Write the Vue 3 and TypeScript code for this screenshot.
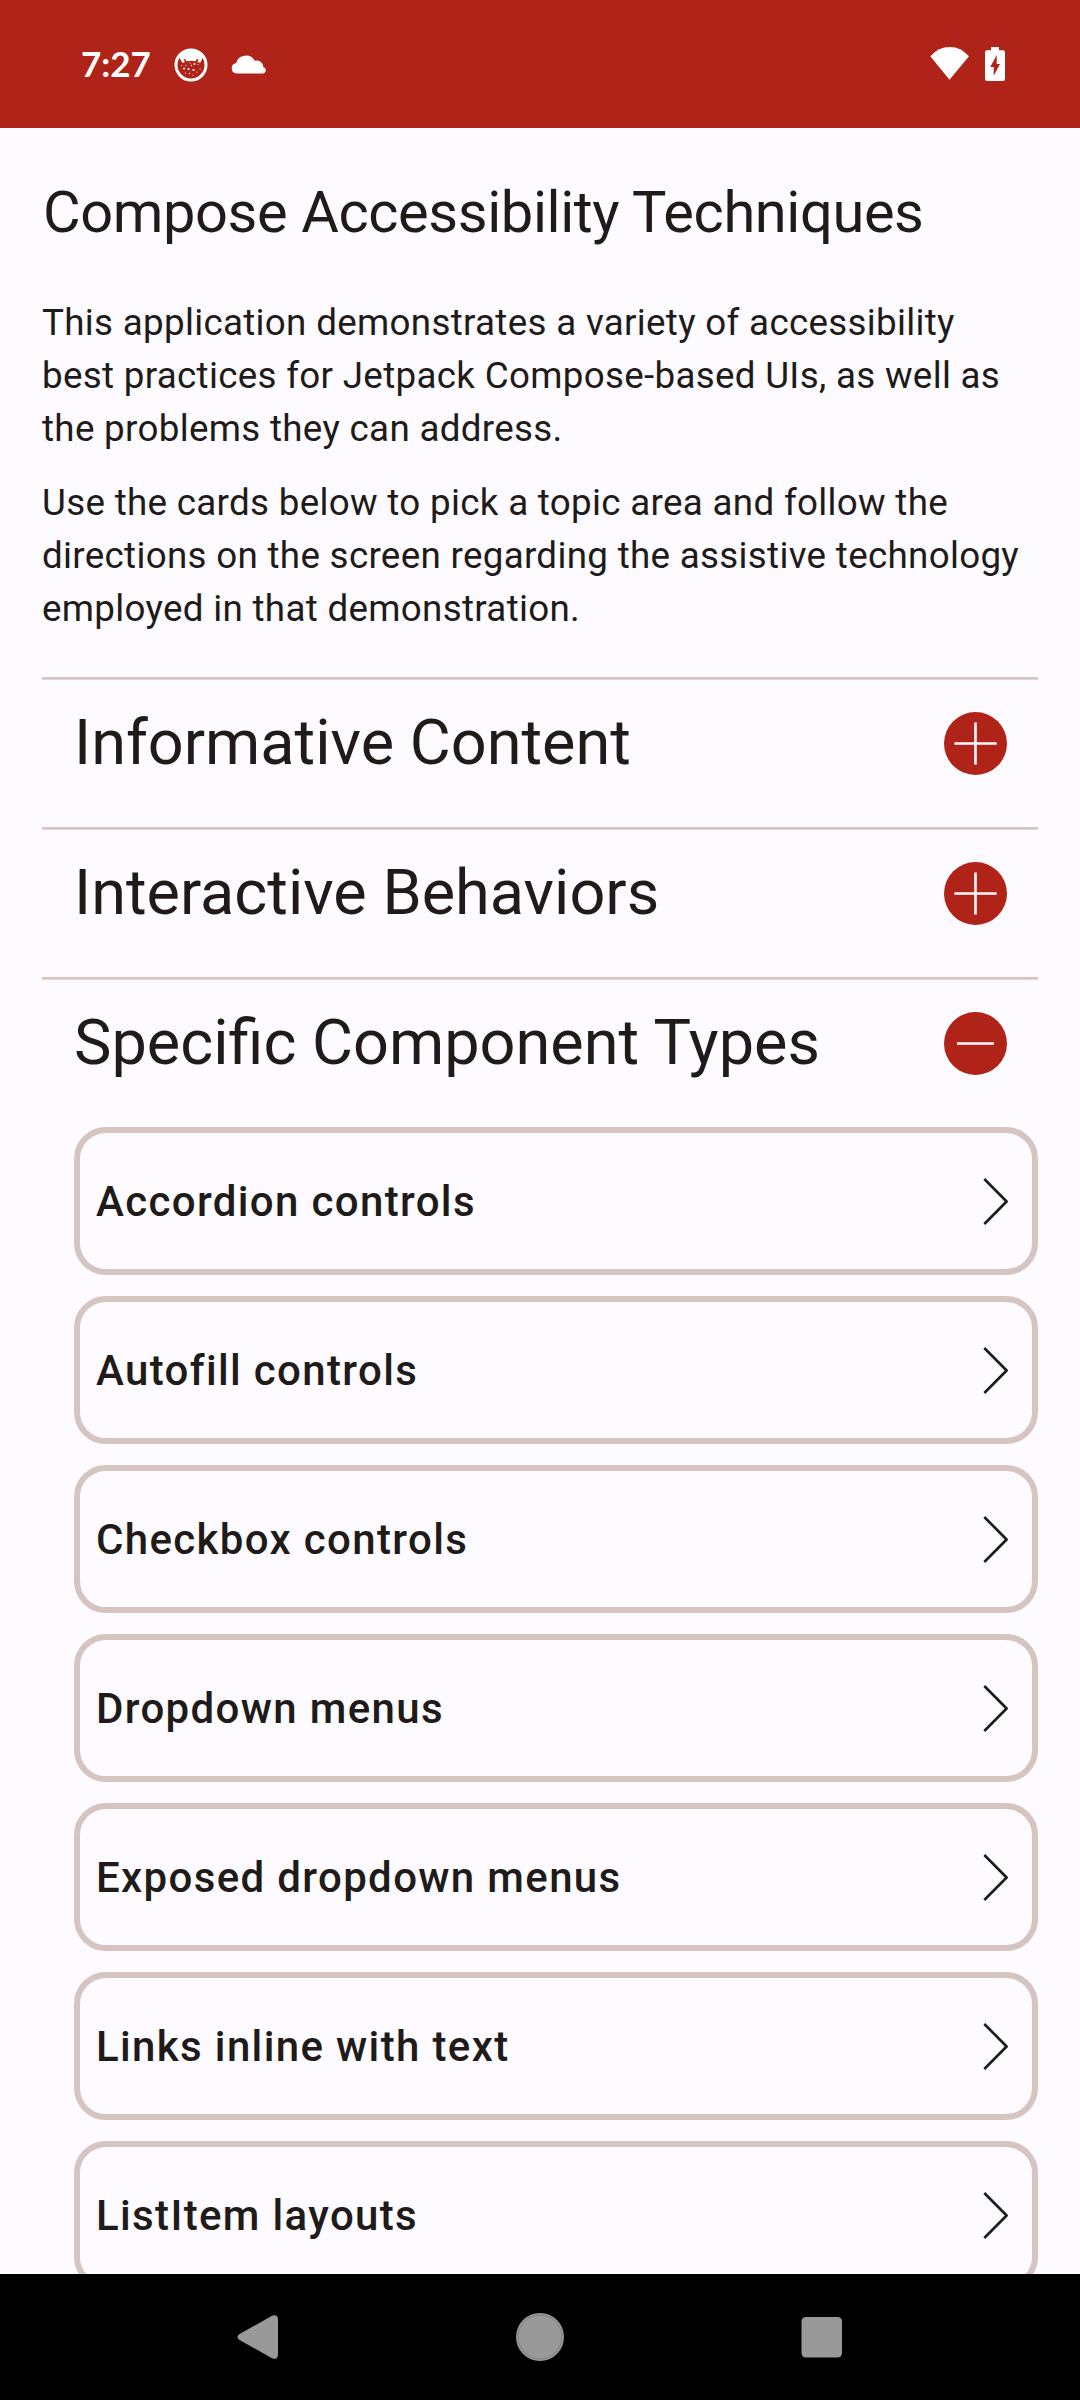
<script setup lang="ts">
import { ref } from 'vue'

interface Section {
  title: string
  items: string[]
}

const sections: Section[] = [
  { title: 'Informative Content', items: [] },
  { title: 'Interactive Behaviors', items: [] },
  {
    title: 'Specific Component Types',
    items: [
      'Accordion controls',
      'Autofill controls',
      'Checkbox controls',
      'Dropdown menus',
      'Exposed dropdown menus',
      'Links inline with text',
      'ListItem layouts',
    ],
  },
]

const expanded = ref<number>(2)

function toggle(index: number): void {
  expanded.value = expanded.value === index ? -1 : index
}
</script>

<template>
  <div class="screen">
    <header class="status">
      <span class="clock">7:27</span>
      <svg class="cat" width="34" height="34" viewBox="0 0 34 34">
        <circle cx="17" cy="17" r="15" fill="none" stroke="#fff" stroke-width="3" />
        <path
          d="M5 7Q17 -1 29 7L29 9 26.500 14.500 23.500 14.500 24.500 11.500 22.800 11 21.500 13.200Q17 12.300 12.500 13.200L11 11 9.500 11.500 11 14 8.500 15 5 9Z"
          fill="#fff"
        />
        <g fill="#fff">
          <circle cx="20.500" cy="16" r="1" /><circle cx="17.500" cy="17.500" r=".7" />
          <circle cx="10" cy="20.500" r="1" /><circle cx="14.500" cy="21" r="1" />
          <circle cx="19.500" cy="22" r="1.100" /><circle cx="12" cy="17.500" r=".6" />
          <circle cx="24" cy="16.500" r=".6" /><circle cx="26" cy="21" r=".6" />
          <circle cx="7.500" cy="17.500" r=".6" /><circle cx="15.500" cy="25.500" r=".7" />
          <circle cx="11.500" cy="25" r=".6" /><circle cx="23" cy="24" r=".6" />
          <circle cx="19" cy="27" r=".6" /><circle cx="16" cy="15" r=".6" />
        </g>
      </svg>
      <svg class="cloud" width="36" height="20" viewBox="0 0 36 20">
        <path d="M5.500 19.500A5.200 5.200 0 0 1 5 9.200A10.200 10.200 0 0 1 23.800 6.800A6.500 6.500 0 0 1 32.300 13A3.400 3.400 0 0 1 32.500 19.500Z" fill="#fff" />
      </svg>
      <span class="spacer"></span>
      <svg class="wifi" width="40" height="34" viewBox="0 0 40 34">
        <path d="M.3 9.300Q8.500 0 19.700 0T39 9.300L19.500 32.700Z" fill="#fff" />
      </svg>
      <svg class="battery" width="20" height="34" viewBox="0 0 20 34">
        <path
          d="M6 0H14V3.300H18Q20 3.300 20 5.300V32Q20 34 18 34H2Q0 34 0 32V5.300Q0 3.300 2 3.300H6ZM11.700 8L5.300 20H8.700V28.700L15 17H11.700Z"
          fill="#fff" fill-rule="evenodd"
        />
      </svg>
    </header>

    <main class="content">
      <h1>Compose Accessibility Techniques</h1>
      <p>
        This application demonstrates a variety of accessibility<br />
        best practices for Jetpack Compose-based UIs, as well as<br />
        the problems they can address.
      </p>
      <p>
        Use the cards below to pick a topic area and follow the<br />
        directions on the screen regarding the assistive technology<br />
        employed in that demonstration.
      </p>

      <div class="sections">
        <section v-for="(section, i) in sections" :key="section.title">
          <div class="heading" @click="toggle(i)">
            <h2>{{ section.title }}</h2>
            <svg width="63" height="63" viewBox="0 0 63 63">
              <circle cx="31.500" cy="31.500" r="31.500" fill="#b02318" />
              <path
                :d="expanded === i ? 'M13 31.500H50' : 'M10.400 31.500H52.600M31.500 10.400V52.600'"
                stroke="#fdfbff" stroke-width="2.625" fill="none"
              />
            </svg>
          </div>
          <div v-if="expanded === i" class="cards">
            <div v-for="item in section.items" :key="item" class="card">
              <span>{{ item }}</span>
              <svg width="26" height="50" viewBox="0 0 26 50">
                <path d="M2.300 2L24.600 24.500L2.300 47" fill="none" stroke="#201a19" stroke-width="2.625" stroke-linejoin="round" />
              </svg>
            </div>
          </div>
        </section>
      </div>
    </main>

    <nav class="navbar">
      <svg width="48" height="50" viewBox="0 0 48 50">
        <path d="M5.500 22L38 3.800Q44 1.500 44 8V42Q44 48.500 38 46.200L5.500 28Q1.500 25 5.500 22Z" fill="#999" />
      </svg>
      <svg width="50" height="50" viewBox="0 0 50 50">
        <circle cx="25" cy="25" r="24" fill="#999" />
        <circle cx="25" cy="25" r="22" fill="none" stroke="#777" stroke-width=".8" />
      </svg>
      <svg width="48" height="50" viewBox="0 0 48 50">
        <rect x="3.500" y="5" width="40.500" height="40.500" rx="4.500" fill="#999" />
      </svg>
    </nav>
  </div>
</template>

<style>
body {
  margin: 0;
  background: #fdfbff;
}
</style>

<style scoped>
.screen {
  width: 1080px;
  height: 2400px;
  display: flex;
  flex-direction: column;
  overflow: hidden;
  background: #fdfbff;
  color: #201a19;
  font-family: Roboto, sans-serif;
}
.screen svg {
  display: block;
  flex: none;
}
.status {
  flex: none;
  box-sizing: border-box;
  height: 128px;
  background: #b02318;
  display: flex;
  align-items: flex-start;
  padding: 0 75px 0 81px;
}
.clock {
  width: 93px;
  margin-top: 43px;
  font: 700 35px/40px Lato, sans-serif;
  color: #fff;
}
.cat {
  margin-top: 48px;
}
.cloud {
  margin: 54px 0 0 23px;
}
.spacer {
  flex: 1;
}
.wifi {
  margin-top: 47px;
}
.battery {
  margin: 47px 0 0 15px;
}
.content {
  flex: 1;
  min-height: 0;
  overflow: hidden;
  padding: 0 42px;
}
h1 {
  margin: 48px 0 47px 1px;
  font-size: 57.750px;
  line-height: 73px;
  font-weight: 400;
  letter-spacing: -0.390px;
  white-space: nowrap;
}
p {
  margin: 0 0 21px;
  font-size: 36.750px;
  line-height: 53px;
  letter-spacing: 0.310px;
  white-space: nowrap;
}
.sections {
  margin-top: 42px;
}
.heading {
  box-sizing: border-box;
  height: 150px;
  border-top: 2px solid #d5c4c0;
  box-shadow: inset 0 1px #e2d3d1;
  padding: 33px 31px 0 32px;
  display: flex;
  justify-content: space-between;
  align-items: flex-start;
}
h2 {
  margin: -9px 0 0;
  font-size: 63px;
  line-height: 80px;
  font-weight: 400;
  white-space: nowrap;
}
.cards {
  display: flex;
  flex-direction: column;
  gap: 21px;
  padding-left: 32px;
}
.card {
  box-sizing: border-box;
  flex: none;
  height: 148px;
  border: 6px solid #d5c4c0;
  border-radius: 32px;
  padding: 1px 24px 0 16px;
  display: flex;
  align-items: center;
  justify-content: space-between;
}
.card span {
  font-size: 42px;
  line-height: 56px;
  font-weight: 500;
  letter-spacing: 1.350px;
}
.navbar {
  flex: none;
  height: 126px;
  background: #000;
  display: flex;
  align-items: center;
  justify-content: space-between;
  padding: 0 234px;
}
</style>
